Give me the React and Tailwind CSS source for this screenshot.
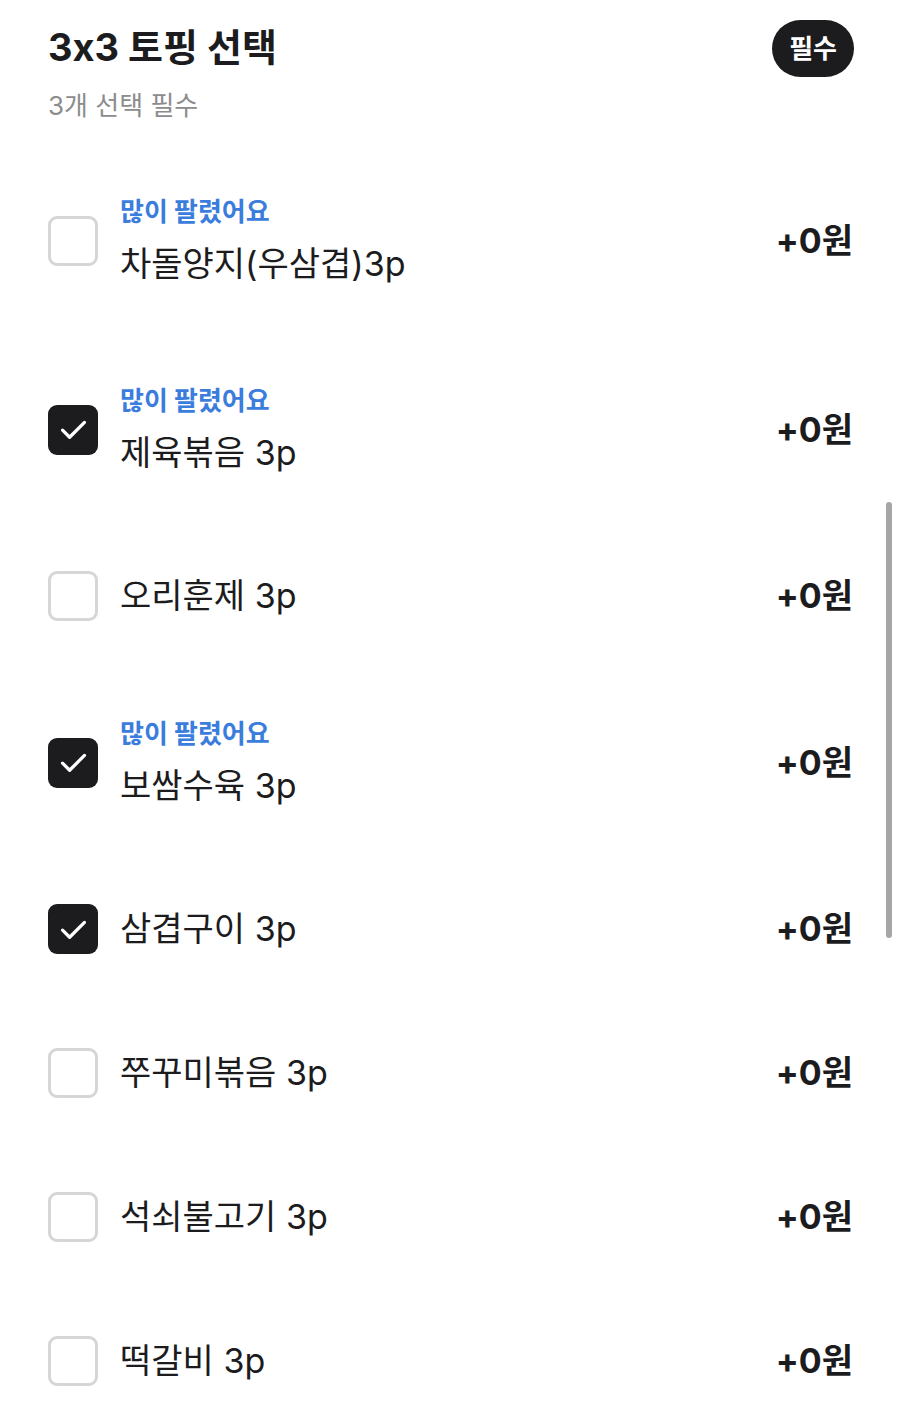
import { useState } from 'react';

const FONT = { fontFamily: 'Inter, "Noto Sans CJK KR", sans-serif' };

const toppings = [
  { name: '차돌양지(우삼겹)3p', best: true, checked: false },
  { name: '제육볶음 3p', best: true, checked: true },
  { name: '오리훈제 3p', best: false, checked: false },
  { name: '보쌈수육 3p', best: true, checked: true },
  { name: '삼겹구이 3p', best: false, checked: true },
  { name: '쭈꾸미볶음 3p', best: false, checked: false },
  { name: '석쇠불고기 3p', best: false, checked: false },
  { name: '떡갈비 3p', best: false, checked: false },
];

const CheckBox = ({ checked }) =>
  checked ? (
    <div className="w-[50px] h-[50px] shrink-0 rounded-[9px] bg-[#1c1c1e] flex items-center justify-center">
      <svg width="31" height="31" viewBox="0 0 24 24" fill="none" stroke="white" strokeWidth="2.5" strokeLinecap="round" strokeLinejoin="round">
        <polyline points="3.5 12.5 9 18 20.5 6.5" />
      </svg>
    </div>
  ) : (
    <div className="w-[50px] h-[50px] shrink-0 rounded-[9px] border-[3px] border-[#d6d6d6] bg-white" />
  );

const App = () => {
  const [items, setItems] = useState(toppings);

  const toggle = (i) =>
    setItems(items.map((it, idx) => (idx === i ? { ...it, checked: !it.checked } : it)));

  return (
    <div className="relative min-h-screen bg-white text-[#1c1c1e] overflow-hidden [font-feature-settings:'calt'_0]" style={FONT}>
      {/* Header */}
      <div className="flex justify-between items-start pl-[48px] pr-[46px] pt-[20px] h-[146px]">
        <div className="mt-[3px]">
          <h2 className="text-[38px] leading-[48px] font-bold">3x3 토핑 선택</h2>
          <p className="mt-[19px] text-[26px] leading-[32px] text-[#8c8c8c]">3개 선택 필수</p>
        </div>
        <div className="h-[57px] px-[17px] rounded-full bg-[#1c1c1e] text-white text-[26px] font-bold flex items-center">
          필수
        </div>
      </div>

      {/* Options */}
      <div className="pl-[48px] pr-[47px]">
        {items.map((item, i) => (
          <div
            key={item.name}
            onClick={() => toggle(i)}
            className={`flex items-center cursor-pointer ${item.best ? 'h-[189px]' : 'h-[144px]'}`}
          >
            <CheckBox checked={item.checked} />
            <div className="flex-1 ml-[22px]">
              {item.best && (
                <div className="text-[26px] leading-[32px] mb-[14px] font-bold text-[#3b7ddd]">많이 팔렸어요</div>
              )}
              <div className="text-[34px] leading-[44px] text-[#1c1c1e]">{item.name}</div>
            </div>
            <div className="text-[34px] leading-[44px] font-bold">+0원</div>
          </div>
        ))}
      </div>

      {/* Scrollbar */}
      <div className="absolute left-[886px] top-[502px] w-[6px] h-[436px] rounded-full bg-[#a6a6a6]" />
    </div>
  );
};

export default App;
